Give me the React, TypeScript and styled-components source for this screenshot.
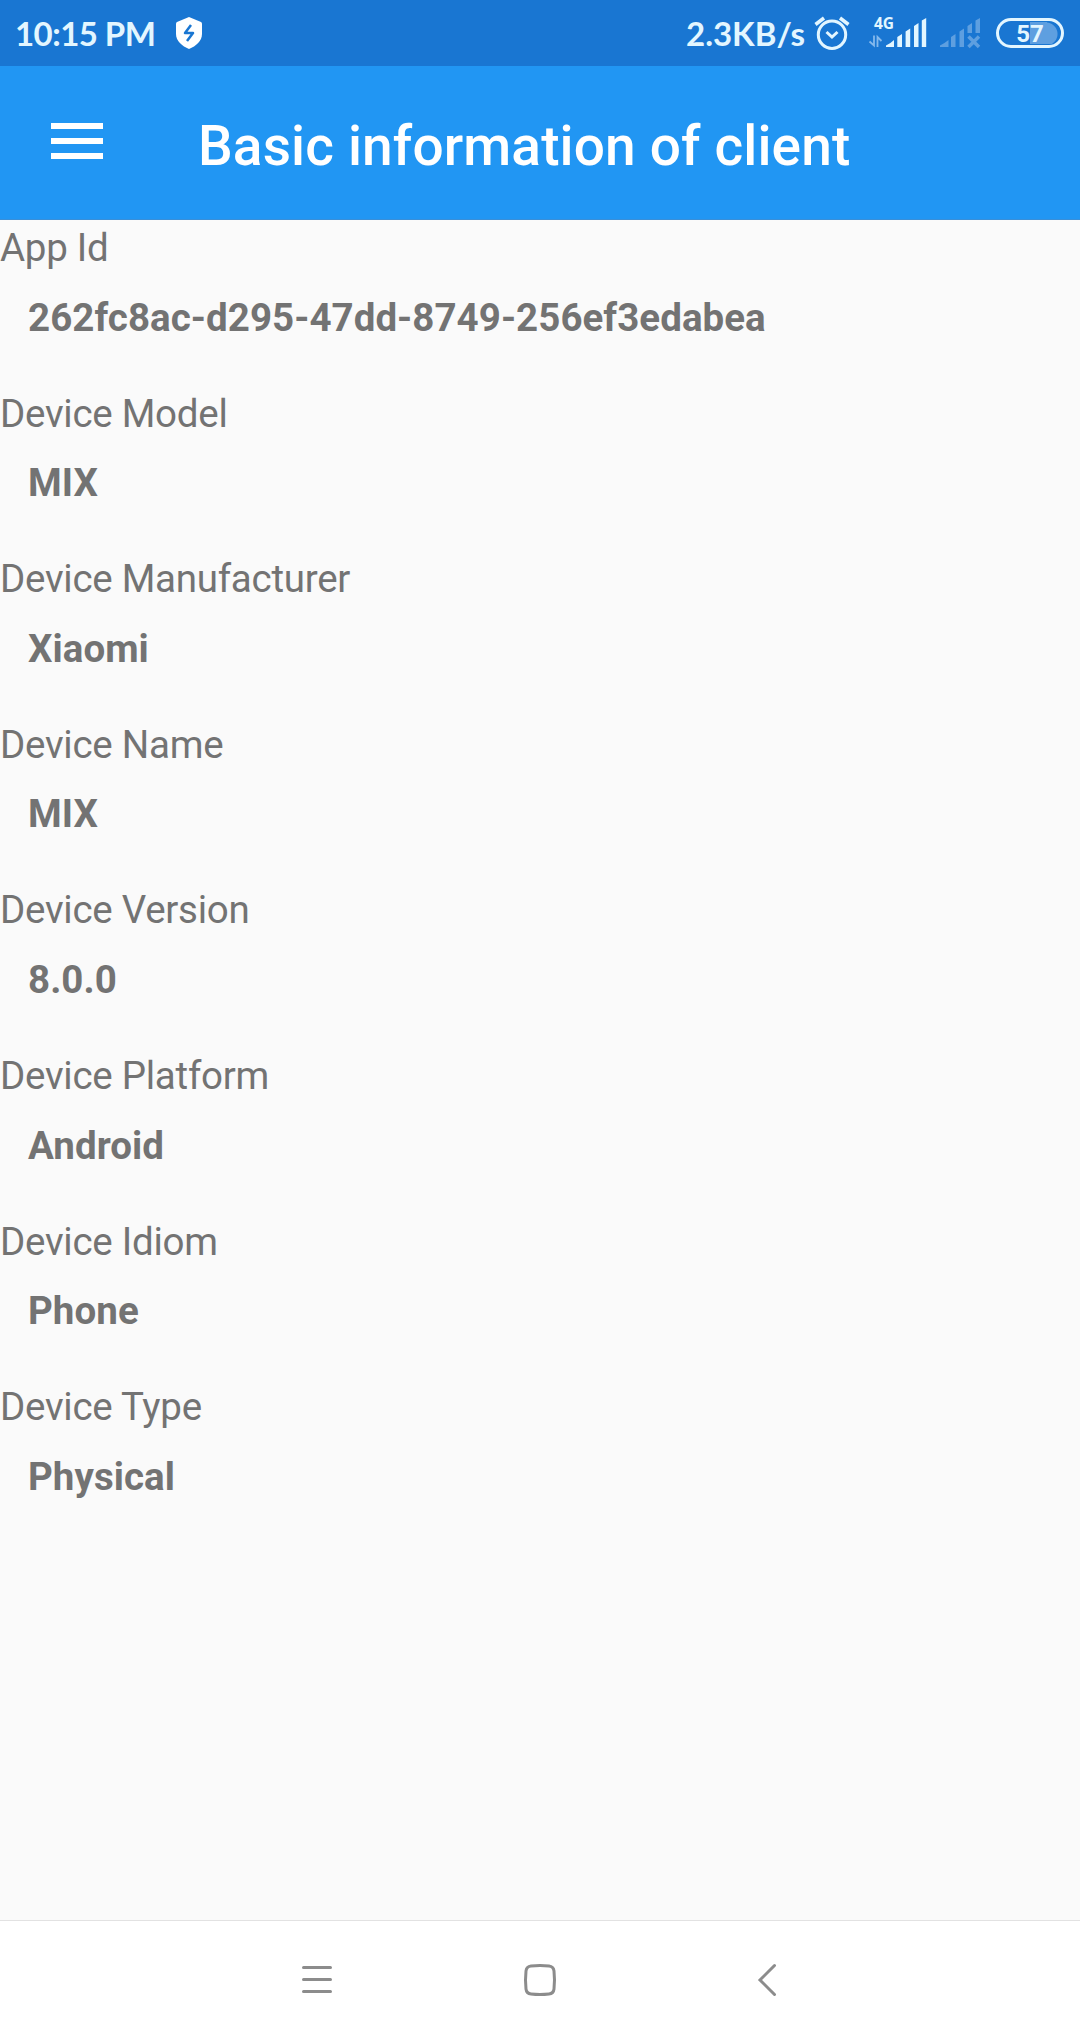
import React from "react";
import styled, { createGlobalStyle } from "styled-components";

const Global = createGlobalStyle`
  * { box-sizing: border-box; }
  body { margin: 0; background: #fafafa; }
`;

const Screen = styled.div`
  width: 1080px;
  height: 2040px;
  display: flex;
  flex-direction: column;
  background: #fafafa;
  font-family: Roboto, "Noto Sans", sans-serif;
  overflow: hidden;
`;

const StatusBar = styled.header`
  height: 66px;
  flex: none;
  display: flex;
  align-items: center;
  padding: 0 16px 0 15px;
  background: #1976d2;
  color: #e3f6ff;
`;

const StatusText = styled.span<{ $width: number; $spacing: number }>`
  width: ${(p) => p.$width}px;
  flex: none;
  font: 700 33px/66px Lato, "Open Sans", sans-serif;
  letter-spacing: ${(p) => p.$spacing}px;
  white-space: nowrap;
`;

const Spacer = styled.div`
  flex: 1;
`;

const Glyph = styled.svg<{ $left?: number }>`
  display: block;
  flex: none;
  margin-left: ${(p) => p.$left ?? 0}px;
`;

const Signal = styled.div`
  width: 60px;
  height: 66px;
  flex: none;
  margin-left: 18px;
  display: grid;
  > * { grid-area: 1 / 1; }
`;

const NetworkType = styled.span`
  padding: 14px 0 0 6px;
  font: 700 15.5px/18px "Noto Sans", sans-serif;
`;

const Battery = styled.div`
  width: 68px;
  height: 30px;
  flex: none;
  margin-left: 14px;
  border: 3px solid #e3f6ff;
  border-radius: 15px;
  display: flex;
  justify-content: center;
  align-items: center;
  padding-top: 2px;
  background: radial-gradient(circle at 18px 12px, #5e9fe0 11px, transparent 12px) right 3px center / 30px 22px no-repeat,
    linear-gradient(#5e9fe0, #5e9fe0) right 14px center / 17px 22px no-repeat;
  font: 700 24px/24px Roboto, sans-serif;
`;

const Toolbar = styled.div`
  height: 154px;
  flex: none;
  display: flex;
  align-items: center;
  padding-left: 51px;
  background: #2196f3;
  border-bottom: 1px solid #3a8fd8;
`;

const MenuButton = styled.button`
  width: 52px;
  height: 36px;
  margin: 0 95px 3px 0;
  padding: 0;
  border: 0;
  background: none;
  display: flex;
  flex-direction: column;
  justify-content: space-between;
`;

const MenuBar = styled.span`
  height: 6px;
  width: 52px;
  background: #fff;
`;

const Title = styled.h1`
  margin: 0;
  padding-top: 6px;
  font-size: 55px;
  font-weight: 500;
  line-height: 66px;
  letter-spacing: 0.14px;
  color: #fff;
  white-space: nowrap;
`;

const Fields = styled.dl`
  flex: 1;
  margin: 0;
  padding-top: 2px;
  color: #737373;
  font-size: 38.5px;
  line-height: 51px;
`;

const Field = styled.div`
  height: 165.6px;
`;

const Label = styled.dt`
  margin: 0;
  letter-spacing: -0.26px;
`;

const Value = styled.dd`
  margin: 18.6px 0 0 28px;
  font-weight: 700;
  letter-spacing: 0.05px;
`;

const NavBar = styled.nav`
  height: 120px;
  flex: none;
  display: flex;
  align-items: flex-start;
  padding: 39px 0 0 297px;
  border-top: 1px solid #e2e2e2;
  background: #fff;
  gap: 183px;
`;

const fields = [
  ["App Id", "262fc8ac-d295-47dd-8749-256ef3edabea"],
  ["Device Model", "MIX"],
  ["Device Manufacturer", "Xiaomi"],
  ["Device Name", "MIX"],
  ["Device Version", "8.0.0"],
  ["Device Platform", "Android"],
  ["Device Idiom", "Phone"],
  ["Device Type", "Physical"],
];

const Shield = () => (
  <Glyph width="28" height="34" viewBox="0 0 28 34">
    <path d="M14 1 L26 6 Q27 6.500 27 8 V18 C27 25 21 30 14 33 C7 30 1 25 1 18 V8 Q1 6.500 2 6Z" fill="#fff" />
    <path d="M16 9 L10 17 H18 L12 25" fill="none" stroke="#1976d2" strokeWidth="2.500" strokeLinejoin="round" />
  </Glyph>
);

const Alarm = () => (
  <Glyph width="36" height="36" viewBox="0 0 36 36" fill="none" stroke="#e3f6ff" strokeWidth="3">
    <circle cx="18" cy="19.700" r="13.700" />
    <path d="M1.500 9.500 L10 3 M26 3 L34.500 9.500" strokeWidth="3.500" />
    <path d="M12.500 17 L18 22 L23.500 17" />
  </Glyph>
);

const SignalFull = () => (
  <Glyph width="60" height="66" viewBox="868 0 60 66" fill="#e3f6ff">
    <path d="M886 47 V45.500 Q891 43 894 40 V47Z" />
    <path d="M897.300 47 V37 L902 34 V47Z M905.600 47 V31.500 L910.200 28.500 V47Z M914 47 V26 L918.500 23 V47Z M921.800 47 V20.500 L926.200 18 V47Z" />
    <g fill="none" stroke="#85b9ec" strokeWidth="1.800">
      <path d="M874 35.500 V45.500 L869.500 41.500" />
      <path d="M877.500 47 V37 L881.500 41" />
    </g>
  </Glyph>
);

const SignalNone = () => (
  <Glyph $left={12} width="42" height="66" viewBox="940 0 42 66" fill="#5e9fe0">
    <path d="M940 47 V45.500 Q945 43 948.500 40 V47Z" />
    <path d="M951 47 V37 L955.500 34 V47Z M959.500 47 V31.500 L964 28.500 V47Z M967.500 33 V26 L972 23 V33Z M975.500 33 V20.500 L980 18 V33Z" />
    <path d="M968.500 36.500 L979 47 M979 36.500 L968.500 47" stroke="#5e9fe0" strokeWidth="3.500" />
  </Glyph>
);

export default function App() {
  return (
    <Screen>
      <Global />
      <StatusBar>
        <StatusText $width={160} $spacing={-0.55}>10:15 PM</StatusText>
        <Shield />
        <Spacer />
        <StatusText $width={128} $spacing={0}>2.3KB/s</StatusText>
        <Alarm />
        <Signal>
          <SignalFull />
          <NetworkType>4G</NetworkType>
        </Signal>
        <SignalNone />
        <Battery>57</Battery>
      </StatusBar>
      <Toolbar>
        <MenuButton aria-label="Menu">
          <MenuBar />
          <MenuBar />
          <MenuBar />
        </MenuButton>
        <Title>Basic information of client</Title>
      </Toolbar>
      <Fields>
        {fields.map(([label, value]) => (
          <Field key={label}>
            <Label>{label}</Label>
            <Value>{value}</Value>
          </Field>
        ))}
      </Fields>
      <NavBar>
        <Glyph width="40" height="40" viewBox="297 1960 40 40" stroke="#8c8c8c" strokeWidth="3" strokeLinecap="round">
          <path d="M303.500 1967.500 H330.500 M303.500 1979.500 H330.500 M303.500 1991.500 H330.500" />
        </Glyph>
        <Glyph width="40" height="40" viewBox="520 1960 40 40" fill="none" stroke="#8c8c8c" strokeWidth="3">
          <path d="M531 1966 Q540 1965 549 1966 Q553.500 1966.500 554 1971 Q555 1980 554 1989 Q553.500 1993.500 549 1994 Q540 1995 531 1994 Q526.500 1993.500 526 1989 Q525 1980 526 1971 Q526.500 1966.500 531 1966Z" />
        </Glyph>
        <Glyph width="40" height="40" viewBox="743 1960 40 40" fill="none" stroke="#8c8c8c" strokeWidth="3" strokeLinecap="round">
          <path d="M774.500 1965.500 L760 1980 L774.500 1994.500" />
        </Glyph>
      </NavBar>
    </Screen>
  );
}
